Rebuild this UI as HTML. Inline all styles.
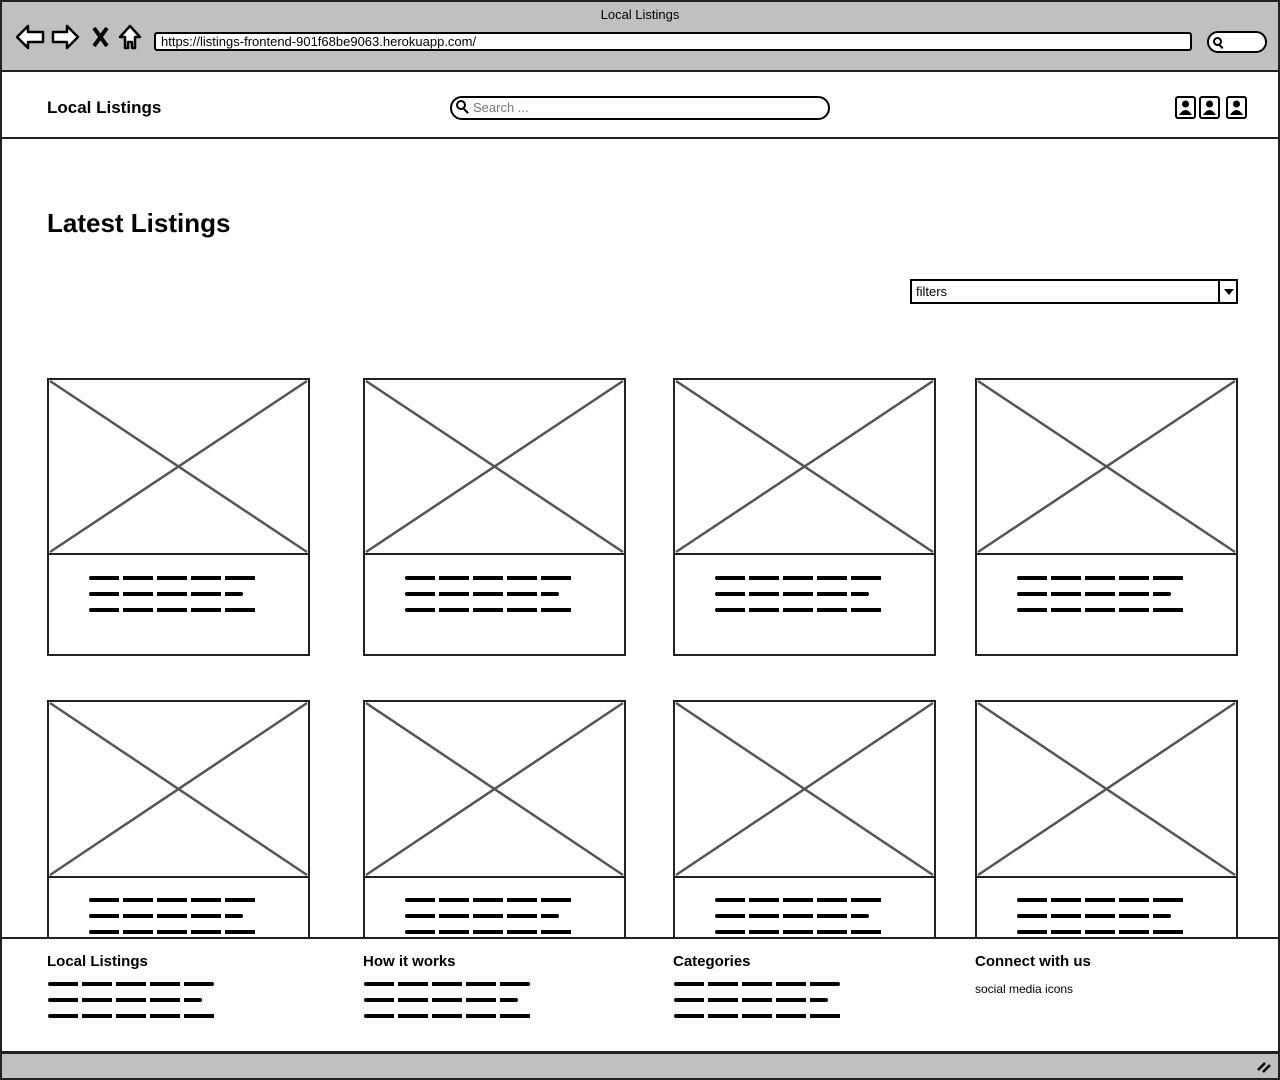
<!DOCTYPE html>
<html><head><meta charset="utf-8"><style>
*{margin:0;padding:0;box-sizing:border-box}
body{width:1280px;height:1080px;background:#fff;position:relative;overflow:hidden;font-family:"Liberation Sans",sans-serif;color:#000}
.a{position:absolute}
.sq{position:absolute;height:4px;background-image:repeating-linear-gradient(90deg,#000 0 30px,transparent 30px 34px);border-radius:2px}
</style></head><body>
<div class="a" style="left:0;top:0;width:1280px;height:72px;background:#c0c0c0;border:2px solid #222"></div>
<div class="a" style="left:0;top:7px;width:1280px;text-align:center;font-size:13px">Local Listings</div>
<svg class="a" style="left:12px;top:22px" width="135" height="30" viewBox="0 0 135 30" fill="#fff" stroke="#000" stroke-width="2.5" stroke-linejoin="round">
<path d="M5 15 L16 4 L16 10 L31 10 L31 20 L16 20 L16 26 Z"/>
<path d="M66 15 L55 4 L55 10 L41 10 L41 20 L55 20 L55 26 Z"/>
<path d="M82 6 L95 24 M95 6 L82 24" stroke-width="4"/>
<path d="M108 15 L118 4 L128 15 L123 15 L123 26 L120 26 L120 20 L116 20 L116 26 L113 26 L113 15 Z"/>
</svg>
<div class="a" style="left:154px;top:32px;width:1038px;height:19px;background:#fff;border:2px solid #000;border-radius:3px;font-size:13px;line-height:15px;padding-left:5px">https://listings-frontend-901f68be9063.herokuapp.com/</div>
<div class="a" style="left:1207px;top:31px;width:60px;height:22px;background:#fff;border:2px solid #000;border-radius:11px"></div>
<div class="a" style="left:1213px;top:37px;width:9px;height:9px;border:2px solid #000;border-radius:50%"></div>
<div class="a" style="left:1220px;top:44px;width:2px;height:5px;background:#000;transform:rotate(-45deg)"></div>
<div class="a" style="left:0;top:72px;width:1280px;height:1008px;border-left:2px solid #222;border-right:2px solid #222"></div>
<div class="a" style="left:0;top:137px;width:1280px;height:2px;background:#222"></div>
<div class="a" style="left:47px;top:98px;font-size:17px;font-weight:bold">Local Listings</div>
<div class="a" style="left:450px;top:96px;width:380px;height:24px;border:2px solid #000;border-radius:12px;font-size:13px;color:#777;padding:2px 0 0 21px">Search ...</div>
<div class="a" style="left:456px;top:100px;width:10px;height:10px;border:2px solid #000;border-radius:50%"></div>
<div class="a" style="left:465px;top:108px;width:2px;height:6px;background:#000;transform:rotate(-45deg)"></div>
<svg class="a" style="left:1174px;top:96px" width="76" height="24" viewBox="0 0 76 24">
<g fill="none" stroke="#000" stroke-width="2"><rect x="2" y="1" width="19" height="21" rx="2"/><rect x="26" y="1" width="19" height="21" rx="2"/><rect x="53" y="1" width="19" height="21" rx="2"/></g>
<g fill="#000"><circle cx="11.5" cy="8" r="3.5"/><path d="M5 19 Q11.5 9 18 19Z"/><circle cx="35.5" cy="8" r="3.5"/><path d="M29 19 Q35.5 9 42 19Z"/><circle cx="62.5" cy="8" r="3.5"/><path d="M56 19 Q62.5 9 69 19Z"/></g>
</svg>
<div class="a" style="left:47px;top:208px;font-size:26px;font-weight:bold">Latest Listings</div>
<div class="a" style="left:910px;top:279px;width:328px;height:25px;border:2px solid #000;font-size:13px;padding:3px 0 0 4px">filters</div>
<div class="a" style="left:1218px;top:279px;width:2px;height:25px;background:#000"></div>
<div class="a" style="left:1224px;top:289px;border-left:5px solid transparent;border-right:5px solid transparent;border-top:6px solid #000"></div>

<svg class="a" style="left:0;top:0" width="1280" height="1080">
<g fill="none" stroke="#555" stroke-width="2.5">
<path d="M50 381 L307 552 M307 381 L50 552"/>
<path d="M366 381 L623 552 M623 381 L366 552"/>
<path d="M676 381 L933 552 M933 381 L676 552"/>
<path d="M978 381 L1235 552 M1235 381 L978 552"/>
<path d="M50 703 L307 875 M307 703 L50 875"/>
<path d="M366 703 L623 875 M623 703 L366 875"/>
<path d="M676 703 L933 875 M933 703 L676 875"/>
<path d="M978 703 L1235 875 M1235 703 L978 875"/>
</g>
<g fill="none" stroke="#222" stroke-width="2">
<rect x="48" y="379" width="261" height="276"/><line x1="48" y1="554" x2="309" y2="554"/>
<rect x="364" y="379" width="261" height="276"/><line x1="364" y1="554" x2="625" y2="554"/>
<rect x="674" y="379" width="261" height="276"/><line x1="674" y1="554" x2="935" y2="554"/>
<rect x="976" y="379" width="261" height="276"/><line x1="976" y1="554" x2="1237" y2="554"/>
<rect x="48" y="701" width="261" height="276"/><line x1="48" y1="877" x2="309" y2="877"/>
<rect x="364" y="701" width="261" height="276"/><line x1="364" y1="877" x2="625" y2="877"/>
<rect x="674" y="701" width="261" height="276"/><line x1="674" y1="877" x2="935" y2="877"/>
<rect x="976" y="701" width="261" height="276"/><line x1="976" y1="877" x2="1237" y2="877"/>
</g>
</svg>

<div class="sq" style="left:89px;top:576px;width:167px"></div><div class="sq" style="left:89px;top:592px;width:154px"></div><div class="sq" style="left:89px;top:608px;width:168px"></div>
<div class="sq" style="left:405px;top:576px;width:167px"></div><div class="sq" style="left:405px;top:592px;width:154px"></div><div class="sq" style="left:405px;top:608px;width:168px"></div>
<div class="sq" style="left:715px;top:576px;width:167px"></div><div class="sq" style="left:715px;top:592px;width:154px"></div><div class="sq" style="left:715px;top:608px;width:168px"></div>
<div class="sq" style="left:1017px;top:576px;width:167px"></div><div class="sq" style="left:1017px;top:592px;width:154px"></div><div class="sq" style="left:1017px;top:608px;width:168px"></div>
<div class="sq" style="left:89px;top:898px;width:167px"></div><div class="sq" style="left:89px;top:914px;width:154px"></div><div class="sq" style="left:89px;top:930px;width:168px"></div>
<div class="sq" style="left:405px;top:898px;width:167px"></div><div class="sq" style="left:405px;top:914px;width:154px"></div><div class="sq" style="left:405px;top:930px;width:168px"></div>
<div class="sq" style="left:715px;top:898px;width:167px"></div><div class="sq" style="left:715px;top:914px;width:154px"></div><div class="sq" style="left:715px;top:930px;width:168px"></div>
<div class="sq" style="left:1017px;top:898px;width:167px"></div><div class="sq" style="left:1017px;top:914px;width:154px"></div><div class="sq" style="left:1017px;top:930px;width:168px"></div>

<div class="a" style="left:0;top:937px;width:1280px;height:116px;background:#fff;border:2px solid #222"></div>
<div class="a" style="left:47px;top:953px;font-size:15px;font-weight:bold">Local Listings</div>
<div class="a" style="left:363px;top:953px;font-size:15px;font-weight:bold">How it works</div>
<div class="a" style="left:673px;top:953px;font-size:15px;font-weight:bold">Categories</div>
<div class="a" style="left:975px;top:953px;font-size:15px;font-weight:bold">Connect with us</div>
<div class="a" style="left:975px;top:982px;font-size:12px">social media icons</div>
<div class="sq" style="left:48px;top:982px;width:166px"></div><div class="sq" style="left:48px;top:998px;width:154px"></div><div class="sq" style="left:48px;top:1014px;width:169px"></div>
<div class="sq" style="left:364px;top:982px;width:166px"></div><div class="sq" style="left:364px;top:998px;width:154px"></div><div class="sq" style="left:364px;top:1014px;width:169px"></div>
<div class="sq" style="left:674px;top:982px;width:166px"></div><div class="sq" style="left:674px;top:998px;width:154px"></div><div class="sq" style="left:674px;top:1014px;width:169px"></div>
<div class="a" style="left:0;top:1052px;width:1280px;height:28px;background:#c0c0c0;border:2px solid #222"></div>
<svg class="a" style="left:1256px;top:1060px" width="16" height="14"><path d="M2 10 L9 3 M7 12 L14 5" stroke="#000" stroke-width="2.5"/></svg>
</body></html>
